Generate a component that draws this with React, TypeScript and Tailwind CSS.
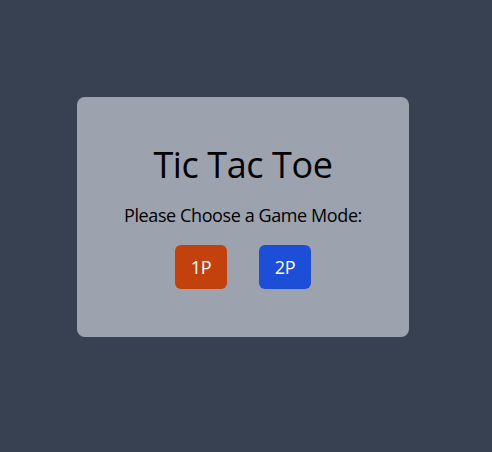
import React from 'react';

const App: React.FC = () => {
  return (
    <div className="min-h-screen w-full bg-[#374151] flex items-center justify-center pb-[18px] pr-[6px] font-['Open_Sans',sans-serif]">
      {/* Menu card */}
      <div className="flex w-[332px] flex-col items-center rounded-lg bg-[#9ca3af] py-12 text-black tracking-tight">
        <h1 className="text-4xl leading-10">Tic Tac Toe</h1>
        <p className="mt-4 text-lg leading-7">Please Choose a Game Mode:</p>
        <div className="mt-4 flex gap-8">
          <button className="w-[52px] rounded-md bg-[#c2410c] py-2 text-lg leading-7 text-white">1P</button>
          <button className="w-[52px] rounded-md bg-[#1d4ed8] py-2 text-lg leading-7 text-white">2P</button>
        </div>
      </div>
    </div>
  );
};

export default App;
